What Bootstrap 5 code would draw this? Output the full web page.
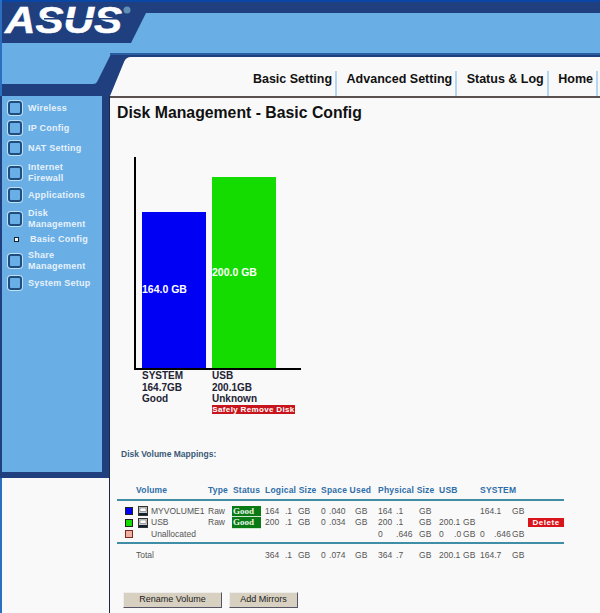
<!DOCTYPE html>
<html><head><meta charset="utf-8">
<link href="https://cdn.jsdelivr.net/npm/bootstrap@5.3.0/dist/css/bootstrap.min.css" rel="stylesheet">
<style>
html,body{height:613px;overflow:hidden}
body{background:#f9f9f9;font-family:"Liberation Sans",Arial,sans-serif;color:#222;width:600px}
.hdr{height:96px;position:relative}
.hdr svg.bgshape{position:absolute;left:0;top:0}
.topnav{position:relative;padding-top:71px;height:96px;padding-right:2px}
.topnav a{font-size:12.5px;font-weight:700;color:#111;text-decoration:none;line-height:16px;padding:0 3px 0 9.5px;border-right:2px solid #b5d6ee}
.shell{height:517px}
.side{width:110px;flex:none;background:#f9f9f9;border-right:1px solid #1a2a4a;border-left:2px solid #2a6fc0}
.sidepanel{height:382px;background:#1f3f7f;padding:0 7px 6px 0;margin-left:-2px;box-sizing:border-box}
.sidefill{height:100%;background:#6aaee6;padding-top:4px;margin-left:2px}
.mi{display:flex;align-items:center;padding-left:6px;gap:6px;color:#e6f2fb;font-size:9px;font-weight:700;line-height:10.5px;letter-spacing:.25px;margin-bottom:4px;min-height:16px}
.mi i{width:14px;height:14px;flex:none;border:2px solid #1e4d80;border-radius:3px;background:#6aaee6;box-shadow:0 0 0 1px #bfe0f5}
.mi.sp6{margin-bottom:6px}.mi.sp5{margin-bottom:5px}.mi.sp2{margin-bottom:2px}.mi.sp3{margin-bottom:3px}
.mi.sub{padding-left:12px;gap:11px}
.mi.sub i{width:5px;height:5px;border:1px solid #123;background:#fff;border-radius:0;box-shadow:none}
.pane{flex:1;padding:5px 0 0 7px;min-width:0;border-top:2px solid #5a5050}
.ttl{font-size:15.8px;font-weight:700;color:#111;line-height:20px;margin:0}
.chart{margin:34px 0 0 17px;width:167px;height:213px;border-left:2px solid #000;border-bottom:2px solid #000;gap:6px;padding-left:6px}
.bar{width:64px;display:flex;align-items:center;color:#fff;font-size:10.5px;font-weight:700}
.b1{height:156px;background:#0000f5}
.b2{height:191px;background:#14dc00}
.labels{margin-left:25px;gap:6px;font-size:10px;font-weight:700;line-height:11.5px;color:#223}
.labels>div{width:64px}
.safe{background:#c8141c;color:#fff;font-size:8px;letter-spacing:.35px;line-height:9px;width:83px;white-space:nowrap;text-align:center;display:block;margin-top:0}
.maph{font-size:8.5px;font-weight:700;color:#3c5a78;margin:35px 0 0 4px;line-height:11px}
.vtb{margin:25px 0 0 0;width:447px;border-collapse:collapse;font-size:8.5px;color:#555;table-layout:fixed;line-height:11px}
.vtb td,.vtb th{padding:0;white-space:nowrap;overflow:visible}
.vtb th{color:#2f6ea8;font-weight:700;height:14px;border-bottom:2px solid #3f8ea6;padding-bottom:3px;letter-spacing:.2px}
.vtb th.sth{padding-left:1px}
.vtb tr.r1 td{padding-top:5px}
.vtb tr.r3 td{padding-bottom:2px;border-bottom:2px solid #3f8ea6}
.vtb tr.tot td{padding-top:6px}
.vtb col:nth-child(1){width:19px}.vtb col:nth-child(2){width:72px}.vtb col:nth-child(3){width:24px}.vtb col:nth-child(4){width:33px}
.vtb col:nth-child(5){width:20px}.vtb col:nth-child(6){width:13px}.vtb col:nth-child(7){width:23px}
.vtb col:nth-child(8){width:8px}.vtb col:nth-child(9){width:26px}.vtb col:nth-child(10){width:23px}
.vtb col:nth-child(11){width:18px}.vtb col:nth-child(12){width:23px}.vtb col:nth-child(13){width:20px}
.vtb col:nth-child(14){width:15px}.vtb col:nth-child(15){width:9px}.vtb col:nth-child(16){width:17px}
.vtb col:nth-child(17){width:14px}.vtb col:nth-child(18){width:18px}.vtb col:nth-child(19){width:16px}.vtb col:nth-child(20){width:36px}
.swcell{padding-left:8px!important}
.sw{display:block;width:8px;height:8px;border:1px solid #222}
.swb{background:#0000f5}.swg{background:#14dc00}.swu{background:#f0b0a0;border-color:#7a2a20}
.vname{display:flex;align-items:center;gap:3px;padding-left:2px}
.vname svg{flex:none}
.vname.noi{padding-left:15px}
.good{background:#0a7a14;color:#e8f5e8;font-family:"Liberation Serif",serif;display:block;width:29px;padding-left:1px;line-height:10.5px;font-weight:700;font-size:9px;border-bottom:.5px solid #cfe5cf}
.del{background:#d8141c;color:#fff;font-size:8px;font-weight:700;display:block;text-align:center;line-height:9px;letter-spacing:.5px}
.acts{margin:31px 0 0 6px;gap:7px}
.xbtn{background:#d8d0c0;border:1px solid;border-color:#eee #556 #556 #eee;color:#222;font-size:9px;line-height:13px;padding:0;border-radius:0;height:16px}
.xw1{width:99px}.xw2{width:69px}
</style></head><body>
<div class="hdr">
<svg class="bgshape" width="600" height="96" viewBox="0 0 600 96">
<rect width="600" height="96" fill="#1f3f7f"/>
<rect width="600" height="2" fill="#0a46a5"/>
<rect width="2" height="96" fill="#2a6fc0"/>
<path d="M146 13H600V53H114Q111 53 110 56L97 82Q96 84 93 84H2V43H131Z" fill="#6aaee6"/>
<rect x="110" y="53" width="490" height="2" fill="#2a5da0"/>
<path d="M110 96L124 62Q126 57 131 57H600V96Z" fill="#f9f9f9"/>
<text x="5" y="33" fill="#fff" stroke="#fff" stroke-width=".5" font-family="Liberation Sans" font-weight="700" font-style="italic" font-size="36" textLength="117" lengthAdjust="spacingAndGlyphs">ASUS</text>
<rect x="44" y="18" width="78" height="1.5" fill="#1f3f7f"/>
<circle cx="127" cy="10" r="3.5" fill="#5f8fb5"/>
</svg>
<nav class="topnav d-flex justify-content-end">
<a href="#">Basic Setting</a><a href="#">Advanced Setting</a><a href="#">Status &amp; Log</a><a href="#">Home</a>
</nav>
</div>
<div class="shell d-flex">
<aside class="side">
<div class="sidepanel"><div class="sidefill">
<div class="mi"><i></i><span>Wireless</span></div>
<div class="mi"><i></i><span>IP Config</span></div>
<div class="mi sp6"><i></i><span>NAT Setting</span></div>
<div class="mi"><i></i><span>Internet<br>Firewall</span></div>
<div class="mi sp5"><i></i><span>Applications</span></div>
<div class="mi sp2"><i></i><span>Disk<br>Management</span></div>
<div class="mi sub sp3"><i></i><span>Basic Config</span></div>
<div class="mi"><i></i><span>Share<br>Management</span></div>
<div class="mi"><i></i><span>System Setup</span></div>
</div></div>
</aside>
<main class="pane">
<h1 class="ttl">Disk Management - Basic Config</h1>
<div class="chart d-flex align-items-end">
<div class="bar b1">164.0 GB</div>
<div class="bar b2">200.0 GB</div>
</div>
<div class="labels d-flex">
<div>SYSTEM<br>164.7GB<br>Good</div>
<div>USB<br>200.1GB<br>Unknown<span class="safe">Safely Remove Disk</span></div>
</div>
<div class="maph">Disk Volume Mappings:</div>
<table class="vtb">
<colgroup><col><col><col><col><col><col><col><col><col><col><col><col><col><col><col><col><col><col><col><col></colgroup>
<tr><th></th><th>Volume</th><th>Type</th><th class="sth">Status</th><th colspan="3">Logical Size</th><th colspan="3">Space Used</th><th colspan="3">Physical Size</th><th colspan="3">USB</th><th colspan="3">SYSTEM</th><th></th></tr>
<tr class="r1"><td class="swcell"><span class="sw swb"></span></td><td><div class="vname"><svg width="10" height="10" viewBox="0 0 10 10"><rect x=".5" y=".5" width="9" height="9" fill="#ccc" stroke="#333"/><rect x="2" y="2" width="6" height="3.5" fill="#fff" stroke="#555" stroke-width=".5"/><rect x="1" y="7" width="8" height="2" fill="#123"/></svg><span>MYVOLUME1</span></div></td><td>Raw</td><td><span class="good">Good</span></td><td>164</td><td>.1</td><td>GB</td><td>0</td><td>.040</td><td>GB</td><td>164</td><td>.1</td><td>GB</td><td></td><td></td><td></td><td colspan="2">164.1</td><td>GB</td><td></td></tr>
<tr><td class="swcell"><span class="sw swg"></span></td><td><div class="vname"><svg width="10" height="10" viewBox="0 0 10 10"><rect x=".5" y=".5" width="9" height="9" fill="#ccc" stroke="#333"/><rect x="2" y="2" width="6" height="3.5" fill="#fff" stroke="#555" stroke-width=".5"/><rect x="1" y="7" width="8" height="2" fill="#123"/></svg><span>USB</span></div></td><td>Raw</td><td><span class="good">Good</span></td><td>200</td><td>.1</td><td>GB</td><td>0</td><td>.034</td><td>GB</td><td>200</td><td>.1</td><td>GB</td><td colspan="2">200.1</td><td>GB</td><td></td><td></td><td></td><td><span class="del">Delete</span></td></tr>
<tr class="r3"><td class="swcell"><span class="sw swu"></span></td><td><div class="vname noi"><span>Unallocated</span></div></td><td></td><td></td><td></td><td></td><td></td><td></td><td></td><td></td><td>0</td><td>.646</td><td>GB</td><td>0</td><td>.0</td><td>GB</td><td>0</td><td>.646</td><td>GB</td><td></td></tr>
<tr class="tot"><td></td><td>Total</td><td></td><td></td><td>364</td><td>.1</td><td>GB</td><td>0</td><td>.074</td><td>GB</td><td>364</td><td>.7</td><td>GB</td><td colspan="2">200.1</td><td>GB</td><td colspan="2">164.7</td><td>GB</td><td></td></tr>
</table>
<div class="acts d-flex">
<button class="xbtn xw1">Rename Volume</button>
<button class="xbtn xw2">Add Mirrors</button>
</div>
</main>
</div>
</body></html>
